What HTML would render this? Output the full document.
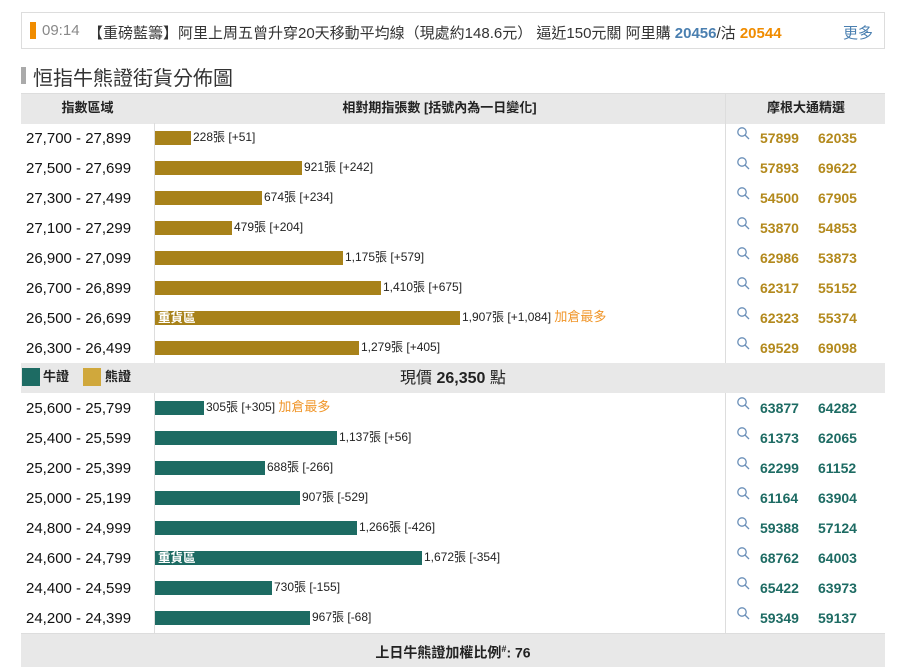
<!DOCTYPE html><html><head><meta charset="utf-8"><style>
body{margin:0;width:898px;height:666px;background:#fff;font-family:"Liberation Sans","Noto Sans CJK TC",sans-serif;position:relative;overflow:hidden;color:#222}
div,span{position:absolute;white-space:nowrap}
.news{left:21px;top:12px;width:862px;height:35px;border:1px solid #ddd}
.r{left:26px;font-size:15px;color:#111;line-height:32px}
.bar{left:155px;height:14px}
.be{background:#a8821a}.bu{background:#1d6b63}
.t{font-size:12px;line-height:14px;color:#222}
.n{font-size:14px;font-weight:bold;line-height:31px}
.bn{color:#b3891c}.un{color:#1d6b63}
.add{color:#f0962a}
.hz{left:158px;color:#fff;font-size:12.5px;font-weight:bold;line-height:14px}
</style></head><body>
<div class="news"></div>
<div style="left:30px;top:22px;width:6px;height:17px;background:#f08c00"></div>
<div style="left:42px;top:22px;font-size:15px;color:#888">09:14</div>
<div style="left:88px;top:22px;font-size:15px;color:#333">【重磅藍籌】阿里上周五曾升穿20天移動平均線（現處約148.6元） 逼近150元關 阿里購 <b style="color:#4a7fb0">20456</b>/沽 <b style="color:#f08c00">20544</b></div>
<div style="left:843px;top:22px;font-size:15px;color:#4a7fb0">更多</div>
<div style="left:21px;top:67px;width:5px;height:17px;background:#aaa"></div>
<div style="left:33px;top:62px;font-size:20px;color:#333">恒指牛熊證街貨分佈圖</div>
<div style="left:21px;top:93px;width:864px;height:30px;background:#e8e8e8;border-top:1px solid #ddd"></div>
<div style="left:21px;top:93px;width:133px;text-align:center;line-height:30px;font-size:13px;font-weight:bold">指數區域</div>
<div style="left:154px;top:93px;width:571px;text-align:center;line-height:30px;font-size:13px;font-weight:bold">相對期指張數 [括號內為一日變化]</div>
<div style="left:725px;top:93px;width:160px;text-align:center;line-height:30px;font-size:13px;font-weight:bold;border-left:1px solid #ddd">摩根大通精選</div>
<div style="left:154px;top:123px;width:1px;height:510px;background:#ddd"></div>
<div style="left:725px;top:123px;width:1px;height:510px;background:#ddd"></div>
<div style="left:21px;top:363px;width:864px;height:30px;background:#e8e8e8"></div>
<div style="left:22px;top:368px;width:18px;height:18px;background:#1d6b63"></div>
<div style="left:43px;top:368px;font-size:13px;font-weight:bold;line-height:18px">牛證</div>
<div style="left:83px;top:368px;width:18px;height:18px;background:#d0a83c"></div>
<div style="left:105px;top:368px;font-size:13px;font-weight:bold;line-height:18px">熊證</div>
<div style="left:400px;top:364px;line-height:30px;font-size:16px">現價 <b>26,350</b> 點</div>
<div style="left:21px;top:633px;width:864px;height:33px;background:#e8e8e8;border-top:1px solid #ddd"></div>
<div style="left:21px;top:634px;width:864px;text-align:center;line-height:30px;font-size:14px;font-weight:bold">上日牛熊證加權比例<sup style="font-size:9px">#</sup>: 76</div>
<svg style="position:absolute;left:0;top:0" width="898" height="666">
<g fill="none" stroke="#6a8fb8" stroke-width="1.3">
<defs><g id="q"><circle cx="5" cy="5" r="4.2"/><line x1="8" y1="8" x2="12" y2="12"/></g></defs>
<use href="#q" x="737" y="127"/><use href="#q" x="737" y="157"/><use href="#q" x="737" y="187"/><use href="#q" x="737" y="217"/><use href="#q" x="737" y="247"/><use href="#q" x="737" y="277"/><use href="#q" x="737" y="307"/><use href="#q" x="737" y="337"/>
<use href="#q" x="737" y="397"/><use href="#q" x="737" y="427"/><use href="#q" x="737" y="457"/><use href="#q" x="737" y="487"/><use href="#q" x="737" y="517"/><use href="#q" x="737" y="547"/><use href="#q" x="737" y="577"/><use href="#q" x="737" y="607"/>
</g></svg>

<div class="r" style="top:123px">27,700 - 27,899</div><div class="bar be" style="top:131px;width:36px"></div><div class="t" style="left:193px;top:130px">228張 [+51]</div><div class="n bn" style="left:760px;top:123px">57899</div><div class="n bn" style="left:818px;top:123px">62035</div>
<div class="r" style="top:153px">27,500 - 27,699</div><div class="bar be" style="top:161px;width:147px"></div><div class="t" style="left:304px;top:160px">921張 [+242]</div><div class="n bn" style="left:760px;top:153px">57893</div><div class="n bn" style="left:818px;top:153px">69622</div>
<div class="r" style="top:183px">27,300 - 27,499</div><div class="bar be" style="top:191px;width:107px"></div><div class="t" style="left:264px;top:190px">674張 [+234]</div><div class="n bn" style="left:760px;top:183px">54500</div><div class="n bn" style="left:818px;top:183px">67905</div>
<div class="r" style="top:213px">27,100 - 27,299</div><div class="bar be" style="top:221px;width:77px"></div><div class="t" style="left:234px;top:220px">479張 [+204]</div><div class="n bn" style="left:760px;top:213px">53870</div><div class="n bn" style="left:818px;top:213px">54853</div>
<div class="r" style="top:243px">26,900 - 27,099</div><div class="bar be" style="top:251px;width:188px"></div><div class="t" style="left:345px;top:250px">1,175張 [+579]</div><div class="n bn" style="left:760px;top:243px">62986</div><div class="n bn" style="left:818px;top:243px">53873</div>
<div class="r" style="top:273px">26,700 - 26,899</div><div class="bar be" style="top:281px;width:226px"></div><div class="t" style="left:383px;top:280px">1,410張 [+675]</div><div class="n bn" style="left:760px;top:273px">62317</div><div class="n bn" style="left:818px;top:273px">55152</div>
<div class="r" style="top:303px">26,500 - 26,699</div><div class="bar be" style="top:311px;width:305px"></div><div class="hz" style="top:311px">重貨區</div><div class="t" style="left:462px;top:310px">1,907張 [+1,084] <span class="add" style="position:static;font-size:13px">加倉最多</span></div><div class="n bn" style="left:760px;top:303px">62323</div><div class="n bn" style="left:818px;top:303px">55374</div>
<div class="r" style="top:333px">26,300 - 26,499</div><div class="bar be" style="top:341px;width:204px"></div><div class="t" style="left:361px;top:340px">1,279張 [+405]</div><div class="n bn" style="left:760px;top:333px">69529</div><div class="n bn" style="left:818px;top:333px">69098</div>

<div class="r" style="top:393px">25,600 - 25,799</div><div class="bar bu" style="top:401px;width:49px"></div><div class="t" style="left:206px;top:400px">305張 [+305] <span class="add" style="position:static;font-size:13px">加倉最多</span></div><div class="n un" style="left:760px;top:393px">63877</div><div class="n un" style="left:818px;top:393px">64282</div>
<div class="r" style="top:423px">25,400 - 25,599</div><div class="bar bu" style="top:431px;width:182px"></div><div class="t" style="left:339px;top:430px">1,137張 [+56]</div><div class="n un" style="left:760px;top:423px">61373</div><div class="n un" style="left:818px;top:423px">62065</div>
<div class="r" style="top:453px">25,200 - 25,399</div><div class="bar bu" style="top:461px;width:110px"></div><div class="t" style="left:267px;top:460px">688張 [-266]</div><div class="n un" style="left:760px;top:453px">62299</div><div class="n un" style="left:818px;top:453px">61152</div>
<div class="r" style="top:483px">25,000 - 25,199</div><div class="bar bu" style="top:491px;width:145px"></div><div class="t" style="left:302px;top:490px">907張 [-529]</div><div class="n un" style="left:760px;top:483px">61164</div><div class="n un" style="left:818px;top:483px">63904</div>
<div class="r" style="top:513px">24,800 - 24,999</div><div class="bar bu" style="top:521px;width:202px"></div><div class="t" style="left:359px;top:520px">1,266張 [-426]</div><div class="n un" style="left:760px;top:513px">59388</div><div class="n un" style="left:818px;top:513px">57124</div>
<div class="r" style="top:543px">24,600 - 24,799</div><div class="bar bu" style="top:551px;width:267px"></div><div class="hz" style="top:551px">重貨區</div><div class="t" style="left:424px;top:550px">1,672張 [-354]</div><div class="n un" style="left:760px;top:543px">68762</div><div class="n un" style="left:818px;top:543px">64003</div>
<div class="r" style="top:573px">24,400 - 24,599</div><div class="bar bu" style="top:581px;width:117px"></div><div class="t" style="left:274px;top:580px">730張 [-155]</div><div class="n un" style="left:760px;top:573px">65422</div><div class="n un" style="left:818px;top:573px">63973</div>
<div class="r" style="top:603px">24,200 - 24,399</div><div class="bar bu" style="top:611px;width:155px"></div><div class="t" style="left:312px;top:610px">967張 [-68]</div><div class="n un" style="left:760px;top:603px">59349</div><div class="n un" style="left:818px;top:603px">59137</div>
</body></html>
